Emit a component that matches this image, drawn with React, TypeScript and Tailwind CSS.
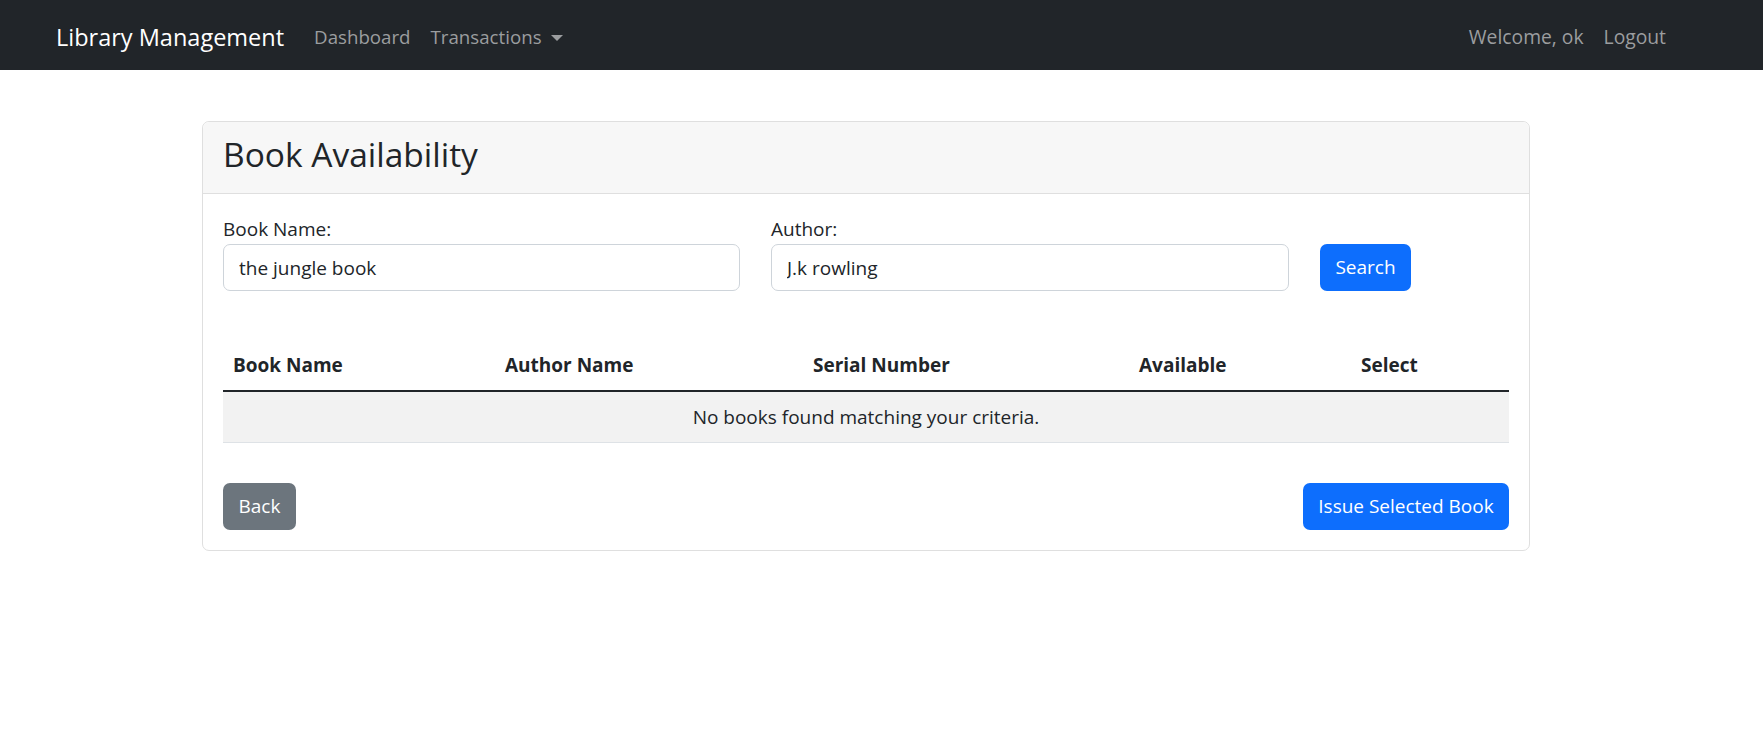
import React from 'react'

const columns = [
  { label: 'Book Name', width: 'w-[272px]' },
  { label: 'Author Name', width: 'w-[308px]' },
  { label: 'Serial Number', width: 'w-[326px]' },
  { label: 'Available', width: 'w-[222px]' },
  { label: 'Select', width: 'w-[158px]' },
]

const Navbar = () => {
  return (
    <nav className="flex h-[70px] items-start bg-[#212529] pt-[19px] pl-[56px] pr-[87px]">
      <a className="mr-[20px] text-[23.5px] leading-[36px] text-white">Library Management</a>
      <div className="mt-[3px] flex text-[18.7px] leading-[30px] text-[#9b9d9f]">
        <a className="px-[10px]">Dashboard</a>
        <a className="flex items-center px-[10px]">
          Transactions
          <span className="ml-[9px] mt-[1px] h-0 w-0 border-x-[6px] border-t-[6px] border-x-transparent border-t-[#9b9d9f]" />
        </a>
      </div>
      <div className="ml-auto mt-[3px] flex text-[19.3px] leading-[30px] text-[#9b9d9f]">
        <span className="px-[10px]">Welcome, ok</span>
        <a className="px-[10px]">Logout</a>
      </div>
    </nav>
  )
}

const BookAvailabilityPage = () => {
  return (
    <div className="pl-[202px] pt-[51px]">
      <div className="w-[1328px] rounded-[7px] border border-[#dfdfdf] bg-white">
        <div className="h-[72px] rounded-t-[7px] border-b border-[#dfdfdf] bg-[#f7f7f7] px-[20px] pt-[11px]">
          <h3 className="text-[33.5px] leading-[42px] text-[#212529]">Book Availability</h3>
        </div>

        <div className="px-[20px] pb-[20px] pt-[20px]">
          <form className="grid grid-cols-[517px_518px_91px] gap-x-[31px]">
            <div className="flex flex-col">
              <label className="leading-[30px]">Book Name:</label>
              <input
                type="text"
                defaultValue="the jungle book"
                className="h-[47px] rounded-[7px] border border-[#ced4da] px-[15px] text-[19px] text-[#212529] outline-none"
              />
            </div>
            <div className="flex flex-col">
              <label className="leading-[30px]">Author:</label>
              <input
                type="text"
                defaultValue="J.k rowling"
                className="h-[47px] rounded-[7px] border border-[#ced4da] px-[15px] text-[19px] text-[#212529] outline-none"
              />
            </div>
            <div className="flex items-end">
              <button type="button" className="h-[47px] w-[91px] rounded-[7px] bg-[#0d6efd] text-white">
                Search
              </button>
            </div>
          </form>

          <table className="mt-[49px] w-full table-fixed border-collapse">
            <thead>
              <tr className="border-b-2 border-[#212529]">
                {columns.map((col) => (
                  <th key={col.label} className={`${col.width} px-[10px] py-[10px] text-left font-bold leading-[30px]`}>
                    {col.label}
                  </th>
                ))}
              </tr>
            </thead>
            <tbody>
              <tr className="border-b border-[#dee2e6] bg-[#f2f2f2]">
                <td colSpan={5} className="px-[10px] py-[10px] text-center leading-[30px]">
                  No books found matching your criteria.
                </td>
              </tr>
            </tbody>
          </table>

          <div className="mt-[40px] flex justify-between">
            <button type="button" className="h-[47px] w-[73px] rounded-[7px] bg-[#6c757d] text-white">
              Back
            </button>
            <button type="button" className="h-[47px] w-[206px] rounded-[7px] bg-[#0d6efd] text-white">
              Issue Selected Book
            </button>
          </div>
        </div>
      </div>
    </div>
  )
}

export default function App() {
  return (
    <div className="min-h-screen bg-white font-['Open_Sans',sans-serif] text-[19px] text-[#212529]">
      <Navbar />
      <BookAvailabilityPage />
    </div>
  )
}
